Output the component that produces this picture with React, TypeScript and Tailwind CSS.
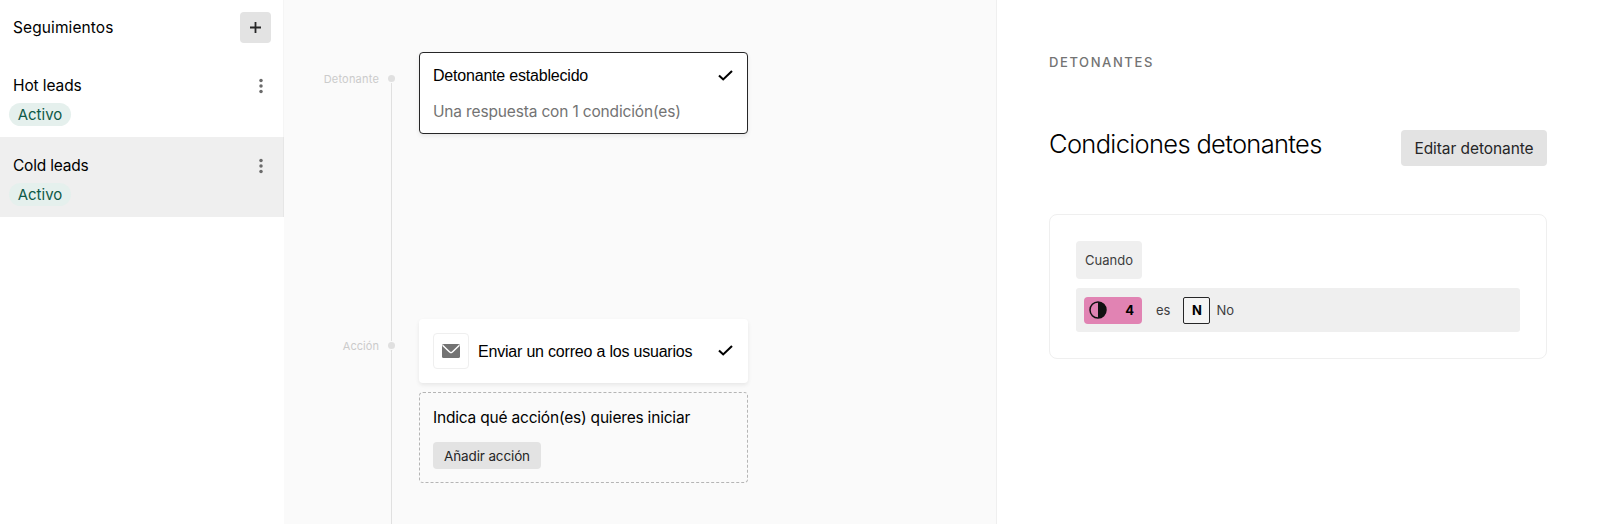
import React from "react";

const followUps = [
  { name: "Hot leads", status: "Activo", selected: false, tracking: "tracking-[-0.1px]" },
  { name: "Cold leads", status: "Activo", selected: true, tracking: "tracking-[-0.2px]" },
];

function CheckIcon() {
  return (
    <svg className="w-[15px] h-[11px] shrink-0" fill="none" stroke="currentColor" viewBox="0 0 15 11">
      <path strokeWidth={2.1} strokeLinejoin="miter" d="M1 5.4l4.2 4L14 1" />
    </svg>
  );
}

function KebabIcon() {
  return (
    <svg className="w-1 h-4 shrink-0" fill="#6b6b6b" viewBox="0 0 4 16">
      <circle cx="2" cy="2.5" r="1.75" />
      <circle cx="2" cy="8" r="1.75" />
      <circle cx="2" cy="13.5" r="1.75" />
    </svg>
  );
}

function MailIcon() {
  return (
    <svg className="w-[18px] h-[14px]" viewBox="0 0 18 14">
      <rect width="18" height="14" rx="1.6" fill="#737373" />
      <path d="M0.6 1.2L7.6 8q1.4 1.2 2.8 0l7-6.8" fill="none" stroke="#fff" strokeWidth="1.5" />
    </svg>
  );
}

function Sidebar() {
  return (
    <aside className="w-[284px] shrink-0 bg-white">
      <div className="flex h-14 items-start justify-between border-r border-[#f5f5f5] pt-3 pr-3 pl-[13px]">
        <h2 className="text-[15.5px] leading-[31px] tracking-[0.1px]">Seguimientos</h2>
        <button className="flex h-[31px] w-[31px] items-center justify-center rounded-[4px] bg-[#e3e3e3]">
          <svg className="w-[11px] h-[11px]" stroke="#262627" viewBox="0 0 11 11">
            <path strokeWidth={1.8} d="M5.5 0v11M0 5.5h11" />
          </svg>
        </button>
      </div>

      {followUps.map((item) => (
        <div
          key={item.name}
          className={`border-r pr-5 pl-[9px] ${
            item.selected ? "h-20 border-[#e6e6e6] bg-[#efefef] pt-[17px]" : "h-[81px] border-[#f5f5f5] bg-white pt-[18px]"
          }`}
        >
          <div className="flex items-center justify-between pl-[4px]">
            <span className={`text-[15.5px] leading-6 ${item.tracking}`}>{item.name}</span>
            <KebabIcon />
          </div>
          <span className="mt-[5px] flex h-[23px] w-[62px] items-center justify-center rounded-full bg-[#e5f0ed] pt-px text-[15px] text-[#0f5947]">
            {item.status}
          </span>
        </div>
      ))}
    </aside>
  );
}

function Canvas() {
  return (
    <main className="flex flex-1 bg-[#fafafa]">
      {/* Step labels */}
      <div className="w-[95px] pt-[71px] text-right text-[11px] leading-4 tracking-[0.2px] text-[#cbcbcb]">
        <p>Detonante</p>
        <p className="mt-[251px] tracking-[0.05px]">Acción</p>
      </div>

      {/* Rail */}
      <div className="ml-[9px] flex w-[7px] flex-col items-center pt-[75px]">
        <div className="h-[7px] w-[7px] shrink-0 rounded-full bg-[#e0e0e0]"></div>
        <div className="mt-px h-[258px] w-px shrink-0 bg-[#e0e0e0]"></div>
        <div className="mt-px h-[7px] w-[7px] shrink-0 rounded-full bg-[#e0e0e0]"></div>
        <div className="mt-px w-px flex-1 bg-[#e0e0e0]"></div>
      </div>

      {/* Cards */}
      <div className="ml-6 w-[329px] pt-[52px]">
        <div className="h-[82px] rounded-[4px] border border-[#262627] bg-white pt-[11px] pr-[14px] pl-[13px] shadow-[0_2px_4px_rgba(0,0,0,0.08)]">
          <div className="flex items-center justify-between">
            <h3 className="font-['Liberation_Sans',Arial,sans-serif] text-base leading-6 tracking-[-0.2px]">
              Detonante establecido
            </h3>
            <span className="pb-[2px]">
              <CheckIcon />
            </span>
          </div>
          <p className="mt-3 text-[15.5px] leading-6 tracking-[-0.16px] text-[#737373]">
            Una respuesta con 1 condición(es)
          </p>
        </div>

        <div className="mt-[185px] flex h-16 items-center rounded-[4px] bg-white pr-[15px] pl-[14px] shadow-[0_2px_4px_rgba(0,0,0,0.08)]">
          <div className="flex h-9 w-9 items-center justify-center rounded-[4px] border border-[#efefef]">
            <MailIcon />
          </div>
          <h3 className="ml-[9px] flex-1 pt-px font-['Liberation_Sans',Arial,sans-serif] text-base tracking-[-0.2px]">
            Enviar un correo a los usuarios
          </h3>
          <span className="pb-px">
            <CheckIcon />
          </span>
        </div>

        <div className="mt-[9px] h-[91px] rounded-[4px] border border-dashed border-[#b5b5b5] pt-[13px] pl-[13px]">
          <h3 className="text-[15.5px] leading-6 tracking-[-0.2px]">Indica qué acción(es) quieres iniciar</h3>
          <button className="mt-3 h-[27px] w-[108px] rounded-[4px] bg-[#e3e3e3] pt-px text-[13.5px] tracking-[-0.13px] text-[#262627]">
            Añadir acción
          </button>
        </div>
      </div>
    </main>
  );
}

function DetailPanel() {
  return (
    <section className="w-[604px] shrink-0 border-l border-[#efefef] bg-white pt-[52px] pr-[53px] pl-[52px]">
      <p className="text-[13px] leading-5 font-medium tracking-[1.6px] text-[#737373]">DETONANTES</p>

      <div className="mt-[58px] flex items-start justify-between">
        <h1 className="-mt-px text-[25.5px] leading-[30px] font-light tracking-[-0.67px]">Condiciones detonantes</h1>
        <button className="h-9 w-[146px] rounded-[4px] bg-[#e3e3e3] pt-px text-[15.5px] tracking-[-0.08px] text-[#262627]">
          Editar detonante
        </button>
      </div>

      <div className="mt-12 h-[145px] rounded-lg border border-[#efefef] px-[26px] pt-[26px] text-[13px] text-[#3d3d3e]">
        <span className="flex h-[38px] w-[66px] items-center justify-center rounded-[4px] bg-[#efefef] pt-px">Cuando</span>
        <div className="mt-[9px] flex h-11 items-center rounded-[3px] bg-[#efefef] px-2">
          <span className="flex h-[27px] w-[58px] items-center justify-between rounded-[4px] bg-[#e183b3] pr-2 pl-[5px] text-black">
            <svg className="w-[18px] h-[18px]" viewBox="0 0 18 18">
              <circle cx="9" cy="9" r="8" fill="none" stroke="#111" strokeWidth="1.5" />
              <path d="M9 1a8 8 0 010 16z" fill="#111" />
            </svg>
            <b className="pt-px font-bold">4</b>
          </span>
          <span className="ml-[14px] pt-px">es</span>
          <span className="ml-[13px] flex h-[27px] w-[27px] items-center justify-center rounded-[2px] border border-[#262627] bg-[#f4f4f4] pt-px font-bold text-black">
            N
          </span>
          <span className="ml-[6px] pt-px">No</span>
        </div>
      </div>
    </section>
  );
}

export default function App() {
  return (
    <div className="flex h-[524px] w-[1600px] overflow-hidden font-['Inter',sans-serif] text-black">
      <Sidebar />
      <Canvas />
      <DetailPanel />
    </div>
  );
}
